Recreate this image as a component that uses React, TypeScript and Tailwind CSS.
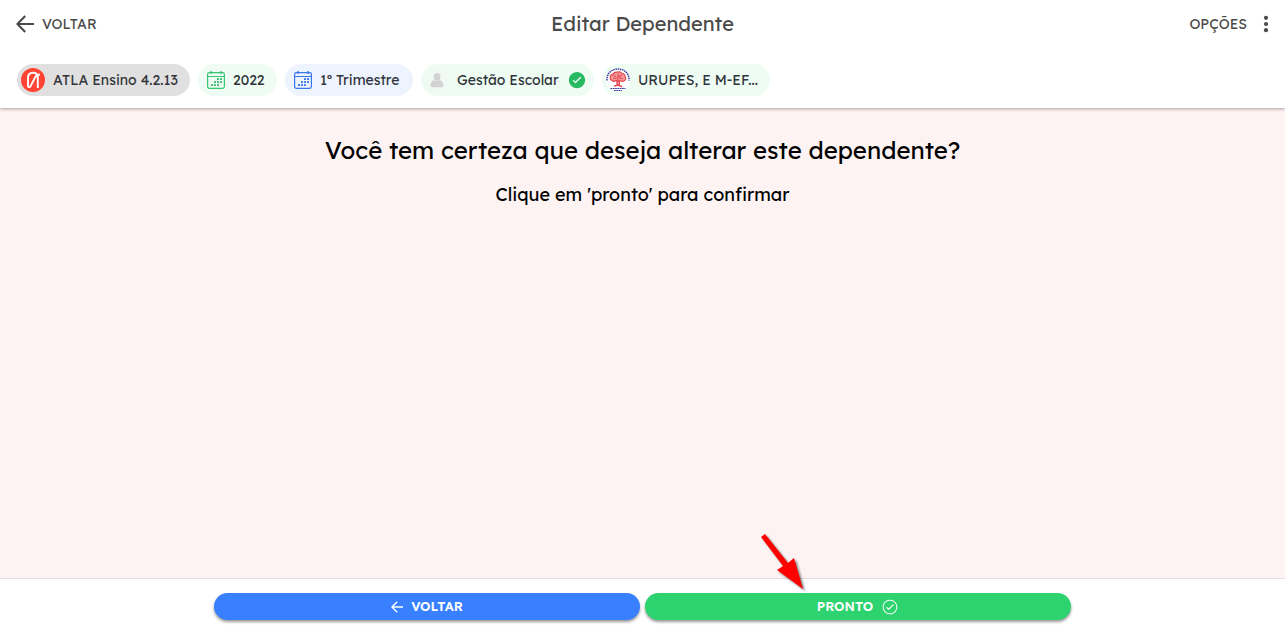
import type { ReactNode } from "react";
import { IoIosCheckmarkCircle, IoIosCheckmarkCircleOutline } from "react-icons/io";

function BackArrow({ className, weight }: { className: string; weight: number }) {
  return (
    <svg viewBox="0 0 18 18" className={className} fill="none" stroke="currentColor" strokeWidth={weight} aria-hidden="true">
      <path d="M18 9H1.6M9.2 1 1.4 9l7.8 8" />
    </svg>
  );
}

function MoreIcon() {
  return (
    <svg viewBox="0 0 6 18" className="h-[18px] w-[6px]" fill="currentColor" aria-hidden="true">
      <circle cx="3" cy="2.8" r="2.1" />
      <circle cx="3" cy="9" r="2.1" />
      <circle cx="3" cy="15.2" r="2.1" />
    </svg>
  );
}

function AtlaLogo() {
  return (
    <svg viewBox="0 0 24 24" className="size-6 shrink-0" fill="none" aria-hidden="true">
      <circle cx="12" cy="12" r="12" fill="#ff4433" />
      <g stroke="#fff" strokeWidth="1.900">
        <path d="M7 18.500V9.800C7 6.500 8.900 4.700 12 4.700c3 0 4.800 1.700 4.800 4.800V20" />
        <path d="M7 17.500c.2 2.300 1.900 2.200 2.700.4L14 9.600c.9-1.800 2.200-3 4.900-3.100" />
      </g>
    </svg>
  );
}

const calendarDots = [
  [11, 8], [14, 8],
  [8, 11], [11, 11], [14, 11],
  [5, 14], [8, 14], [11, 14],
];

function CalendarIcon({ className }: { className: string }) {
  return (
    <svg viewBox="0 0 18 18" className={`h-[18px] w-[18px] shrink-0 ${className}`} fill="none" stroke="currentColor" aria-hidden="true">
      <rect x="0.6" y="1.600" width="16.8" height="15.8" rx="1.8" strokeWidth="1.200" />
      <path d="M.6 5.500h16.800" strokeWidth="1" />
      <path d="M4 0v3M14 0v3" strokeWidth="1.400" />
      <g fill="currentColor" stroke="none">
        {calendarDots.map(([x, y]) => (
          <rect key={`${x}-${y}`} x={x - 1} y={y - 1} width="2" height="2" rx="0.600" />
        ))}
      </g>
    </svg>
  );
}

function PersonIcon() {
  return (
    <svg viewBox="0 0 24 24" className="size-6 shrink-0" aria-hidden="true">
      <circle cx="12" cy="12" r="12" fill="#f0f9f4" />
      <g fill="#d2d2d2">
        <ellipse cx="12" cy="8.800" rx="3.400" ry="3.900" />
        <path d="M5.600 17.500c0-3 1.200-4.800 3.700-5.200 1.700 1.100 3.700 1.100 5.400 0 2.500.4 3.700 2.200 3.700 5.200 0 1-.5 1.700-1.500 1.700H7.100c-1 0-1.500-.7-1.500-1.700z" />
      </g>
    </svg>
  );
}

function SchoolCrest() {
  return (
    <svg viewBox="0 0 24 24" className="size-6 shrink-0" fill="none" aria-hidden="true">
      <circle cx="12" cy="12" r="12" fill="#fff" />
      <path d="M1 12.500C.6 5.500 5.500 1 12 1s11.400 4.500 11 11.500" stroke="#3b3f9c" strokeWidth="1.500" strokeDasharray="1.500 .7" />
      <g stroke="#e5484d" strokeWidth="1.200">
        <path d="M4.500 9.500c-.6-2.500 1.700-3.300 2.800-3.600C8.200 3.700 10.500 4.500 12 4c1.700-.4 3.300.4 4 1.600 2 .1 3.300 1.700 3.100 3.300 1.200 1.300.7 3.400-1 3.800-1.300 1-2.800.5-3.500 0-1.200.7-3.300.7-4.500-.2-1.500 1-3.200.8-4-.2-1.700-.2-2.300-1.600-1.600-2.800z" fill="#f79a9a" />
        <path d="M7 7.500l3 1M12 5.500v3M15.500 7l-2.500 2M7 10.500l3.500-.5M17 10.500l-4-.5M12 8l-.5 4" />
        <path d="M11 12l.3 5.500M13.200 12v5.500M8.200 18.200l3.200-1.200 1.600.5 3 1" strokeWidth="1.500" />
      </g>
      <path d="M4.500 20.500h15M8 22.500h8" stroke="#3b3f9c" strokeWidth="1" strokeDasharray="1.800 .5" />
    </svg>
  );
}

function Chip({ className, children }: { className: string; children: ReactNode }) {
  return (
    <li className={`flex h-8 items-center gap-2 rounded-full text-sm whitespace-nowrap text-[#30343a] ${className}`}>
      {children}
    </li>
  );
}

function PointerArrow() {
  return (
    <svg
      viewBox="0 0 50 62"
      className="pointer-events-none absolute -top-[60px] left-[115px] h-[62px] w-[50px] drop-shadow-[2px_2px_1px_rgba(0,0,0,0.5)]"
      aria-hidden="true"
    >
      <path d="M1 4 5 1 28 30 34 25 43 56 17 37 23 33z" fill="#ff0000" />
    </svg>
  );
}

const actionClass =
  "flex h-[27px] flex-1 items-center justify-center gap-2 rounded-full text-[13px] font-semibold text-white shadow-[0_2px_3px_rgba(0,0,0,0.4)]";

export default function App() {
  return (
    <div className="flex min-h-screen flex-col bg-[#fdf3f2] font-['Lexend','Inter',sans-serif] text-black">
      <header className="relative bg-white shadow-[0_1px_3px_rgba(60,30,30,0.4)]">
        <div className="grid h-12 grid-cols-[1fr_auto_1fr] items-center px-4 text-[#4a4a4a]">
          <button type="button" className="flex items-center gap-2 justify-self-start text-sm">
            <BackArrow className="size-[18px]" weight={2.1} />
            VOLTAR
          </button>
          <h1 className="text-xl">Editar Dependente</h1>
          <button type="button" className="flex items-center gap-4 justify-self-end text-sm">
            OPÇÕES
            <MoreIcon />
          </button>
        </div>
        <ul className="flex flex-wrap gap-2 px-[17px] pt-4 pb-3">
          <Chip className="min-w-[173px] bg-[#e0e0e0] pr-2 pl-1">
            <AtlaLogo />
            ATLA Ensino 4.2.13
          </Chip>
          <Chip className="min-w-[79px] bg-[#eefcf3] pr-2 pl-[9px]">
            <CalendarIcon className="text-[#3bc472]" />
            2022
          </Chip>
          <Chip className="min-w-[128px] bg-[#edf3ff] pr-2 pl-[9px]">
            <CalendarIcon className="text-[#3b78e7]" />
            1º Trimestre
          </Chip>
          <Chip className="min-w-[173px] bg-[#eefcf3] pr-[7px] pl-1">
            <PersonIcon />
            <span className="flex-1">Gestão Escolar</span>
            <IoIosCheckmarkCircle className="size-5 text-[#28ba62]" aria-hidden="true" />
          </Chip>
          <Chip className="min-w-[168px] bg-[#eefcf3] pr-2 pl-1">
            <SchoolCrest />
            URUPES, E M-EF...
          </Chip>
        </ul>
      </header>

      <main className="flex-1 px-4 pt-6 text-center">
        <h2 className="text-2xl leading-9">Você tem certeza que deseja alterar este dependente?</h2>
        <p className="mt-3 text-lg leading-[30px]">Clique em 'pronto' para confirmar</p>
      </main>

      <footer className="border-t border-[#e6dcdc] bg-white pt-[14px] pb-3">
        <div className="mx-auto flex w-2/3 gap-[5px]">
          <button type="button" className={`${actionClass} bg-[#3880ff]`}>
            <BackArrow className="size-3" weight={2.2} />
            VOLTAR
          </button>
          <div className="relative flex flex-1">
            <button type="button" className={`${actionClass} bg-[#2dd36f]`}>
              PRONTO
              <IoIosCheckmarkCircleOutline className="size-[18px]" aria-hidden="true" />
            </button>
            <PointerArrow />
          </div>
        </div>
      </footer>
    </div>
  );
}
